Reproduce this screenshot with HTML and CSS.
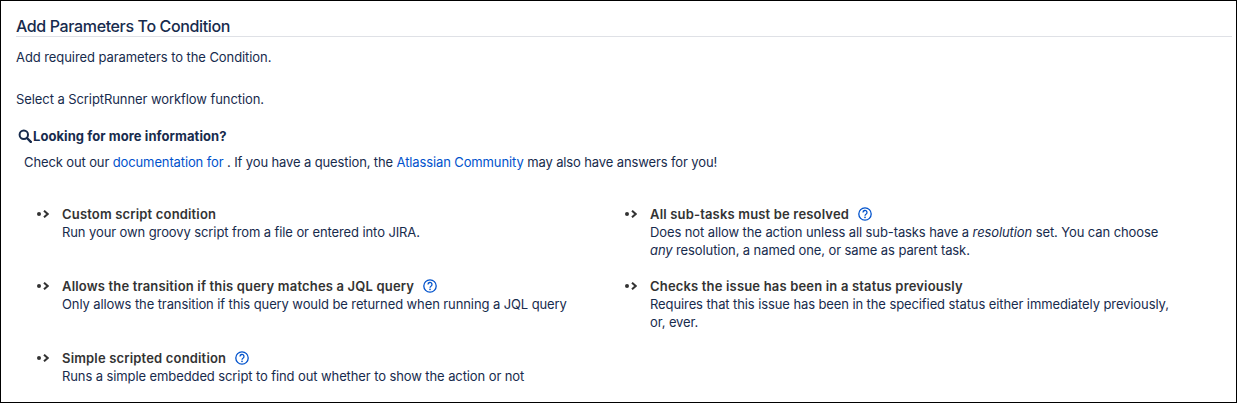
FILE: index.html
```html
<!DOCTYPE html>
<html>
<head>
    <meta charset="UTF-8">
    <title>Add Parameters To Condition</title>
    <link rel="stylesheet" href="styles.css">
</head>
<body>
    <div class="frame">
        <h2 class="title">Add Parameters To Condition</h2>
        <p class="intro">Add required parameters to the Condition.</p>
        <p class="select">Select a ScriptRunner workflow function.</p>
        <h3 class="more">
            <svg class="search" viewBox="0 0 14 14" width="14" height="14"><circle cx="5.8" cy="5.8" r="4.2" fill="none" stroke="#172b4d" stroke-width="2"/><path d="M9 9l3.8 3.8" stroke="#172b4d" stroke-width="2.4" stroke-linecap="round"/></svg>
            Looking for more information?
        </h3>
        <p class="check">Check out our <a href="#">documentation for</a> . If you have a question, the <a href="#">Atlassian Community</a> may also have answers for you!</p>

        <div class="items">
            <div class="item">
                <svg class="arrow" viewBox="0 0 12 8" width="12" height="8"><circle cx="2" cy="4" r="2" fill="#333"/><path d="M7 .7l3.7 3.3-3.7 3.3" fill="none" stroke="#333" stroke-width="2"/></svg>
                <div>
                    <div class="name">Custom script condition</div>
                    <div class="desc">Run your own groovy script from a file or entered into JIRA.</div>
                </div>
            </div>
            <div class="item">
                <svg class="arrow" viewBox="0 0 12 8" width="12" height="8"><circle cx="2" cy="4" r="2" fill="#333"/><path d="M7 .7l3.7 3.3-3.7 3.3" fill="none" stroke="#333" stroke-width="2"/></svg>
                <div>
                    <div class="name">All sub-tasks must be resolved
                        <svg class="help" viewBox="0 0 14 14" width="14" height="14"><circle cx="7" cy="7" r="6.2" fill="none" stroke="#0052cc" stroke-width="1.3"/><path d="M5 5.5a2 2 0 1 1 3 1.7c-.7.4-1 .8-1 1.5" fill="none" stroke="#0052cc" stroke-width="1.3"/><circle cx="7" cy="10.4" r=".8" fill="#0052cc"/></svg>
                    </div>
                    <div class="desc">Does not allow the action unless all sub-tasks have a <em>resolution</em> set. You can choose <em>any</em> resolution, a named one, or same as parent task.</div>
                </div>
            </div>
            <div class="item">
                <svg class="arrow" viewBox="0 0 12 8" width="12" height="8"><circle cx="2" cy="4" r="2" fill="#333"/><path d="M7 .7l3.7 3.3-3.7 3.3" fill="none" stroke="#333" stroke-width="2"/></svg>
                <div>
                    <div class="name">Allows the transition if this query matches a JQL query
                        <svg class="help" viewBox="0 0 14 14" width="14" height="14"><circle cx="7" cy="7" r="6.2" fill="none" stroke="#0052cc" stroke-width="1.3"/><path d="M5 5.5a2 2 0 1 1 3 1.7c-.7.4-1 .8-1 1.5" fill="none" stroke="#0052cc" stroke-width="1.3"/><circle cx="7" cy="10.4" r=".8" fill="#0052cc"/></svg>
                    </div>
                    <div class="desc">Only allows the transition if this query would be returned when running a JQL query</div>
                </div>
            </div>
            <div class="item">
                <svg class="arrow" viewBox="0 0 12 8" width="12" height="8"><circle cx="2" cy="4" r="2" fill="#333"/><path d="M7 .7l3.7 3.3-3.7 3.3" fill="none" stroke="#333" stroke-width="2"/></svg>
                <div>
                    <div class="name">Checks the issue has been in a status previously</div>
                    <div class="desc">Requires that this issue has been in the specified status either immediately previously, or, ever.</div>
                </div>
            </div>
            <div class="item">
                <svg class="arrow" viewBox="0 0 12 8" width="12" height="8"><circle cx="2" cy="4" r="2" fill="#333"/><path d="M7 .7l3.7 3.3-3.7 3.3" fill="none" stroke="#333" stroke-width="2"/></svg>
                <div>
                    <div class="name">Simple scripted condition
                        <svg class="help" viewBox="0 0 14 14" width="14" height="14"><circle cx="7" cy="7" r="6.2" fill="none" stroke="#0052cc" stroke-width="1.3"/><path d="M5 5.5a2 2 0 1 1 3 1.7c-.7.4-1 .8-1 1.5" fill="none" stroke="#0052cc" stroke-width="1.3"/><circle cx="7" cy="10.4" r=".8" fill="#0052cc"/></svg>
                    </div>
                    <div class="desc">Runs a simple embedded script to find out whether to show the action or not</div>
                </div>
            </div>
        </div>
    </div>
</body>
</html>
```

FILE: styles.css
```css
html,
body {
    margin: 0;
    padding: 0;
}

body {
    color: #172b4d;
    font-family: Inter, "Noto Sans", sans-serif;
    font-size: 13px;
    line-height: 18px;
    letter-spacing: -0.1px;
    background-color: #fff;
}

a {
    color: #0052cc;
    text-decoration: none;
}

.frame {
    box-sizing: border-box;
    width: 1237px;
    height: 403px;
    border: 1px solid #000;
    padding: 15px 4px 0 15px;
    overflow: hidden;
}

.title {
    margin: 0;
    font-size: 16px;
    font-weight: 500;
    line-height: 20px;
    letter-spacing: -0.37px;
    border-bottom: 1px solid #dfe1e6;
}

.intro {
    margin: 11px 0 0 0;
    letter-spacing: -0.08px;
}

.select {
    margin: 24px 0 0 0;
    letter-spacing: -0.08px;
}

.more {
    display: flex;
    align-items: center;
    gap: 1px;
    margin: 19px 0 0 2px;
    font-size: 13px;
    font-weight: 700;
    line-height: 18px;
    letter-spacing: 0.07px;
}

.check {
    margin: 8px 0 0 8px;
    letter-spacing: -0.12px;
}

.items {
    display: grid;
    grid-template-columns: 588px 551px;
    margin: 34px 0 0 21px;
}

.item {
    display: flex;
    gap: 13px;
    height: 72px;
}

.arrow {
    flex: none;
    margin-top: 5px;
}

.name {
    color: #333;
    font-weight: 600;
    letter-spacing: 0.17px;
}

.help {
    margin-left: 5px;
    vertical-align: -2px;
}
```
